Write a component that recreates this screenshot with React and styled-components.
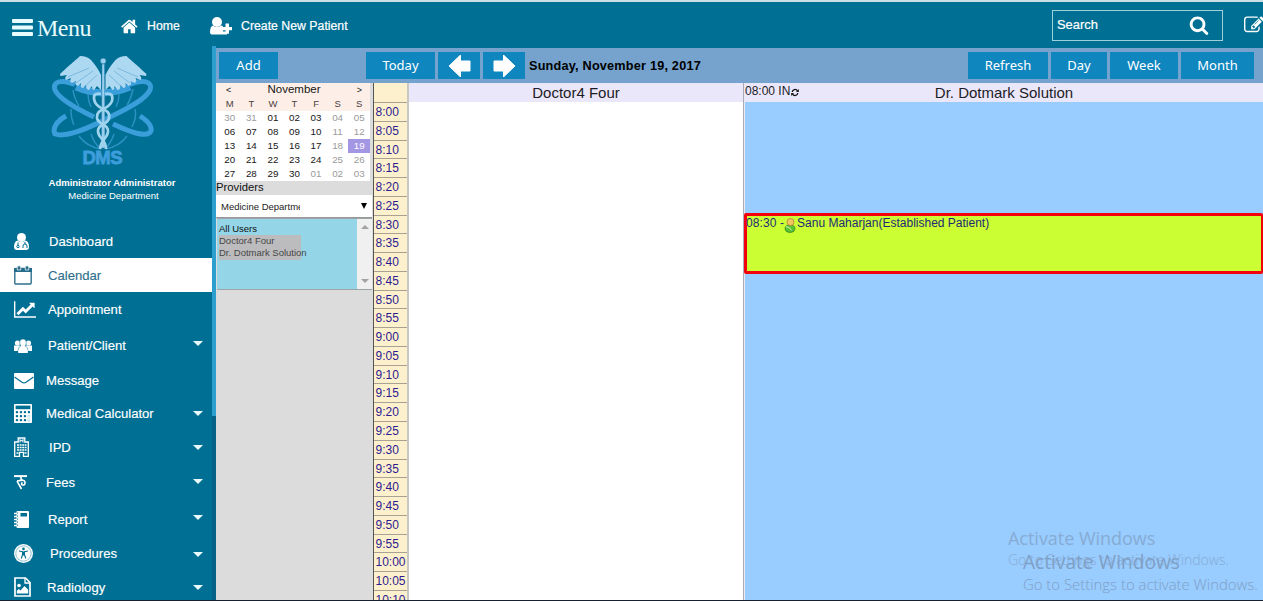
import React from "react";
import styled, { createGlobalStyle } from "styled-components";

const Global = createGlobalStyle`
  * { box-sizing: border-box; }
  body { margin: 0; overflow: hidden; font-family: "Liberation Sans", Arial, sans-serif; }
  svg { display: block; flex: none; }
`;

const Page = styled.div`
  width: 1263px; height: 601px; display: flex; flex-direction: column;
  background: #006f94; border-top: 2px solid #c9dfe4; border-bottom: 1px solid #16202e;
  overflow: hidden; color: #fff;
`;
const Header = styled.header`
  height: 46px; flex: none; display: flex; align-items: center; padding-left: 12px;
`;
const MenuTitle = styled.div`
  display: flex; align-items: center; gap: 4px; width: 109px; padding-top: 5px;
  font: 24px/28px "Liberation Serif", "Times New Roman", serif; letter-spacing: -0.5px; color: #e8fbff;
`;
const HeaderLink = styled.div`
  display: flex; align-items: center; gap: ${p => p.$gap}px; width: ${p => p.$w}px; padding-top: 2px;
  font-size: 12.3px; line-height: 16px; white-space: nowrap; -webkit-text-stroke: 0.2px #fff;
`;
const SearchBox = styled.div`
  margin-left: auto; width: 171px; height: 31px; border: 1px solid #9fd0dc; display: flex; align-items: center;
  justify-content: space-between; padding: 0 13px 1px 4px; font-size: 12.9px; -webkit-text-stroke: 0.2px #fff;
`;
const HeaderEdit = styled.div` margin-left: 21px; width: 19px; height: 21px; overflow: hidden; `;

const Body = styled.div` flex: 1; min-height: 0; display: flex; `;
const Sidebar = styled.aside` width: 212px; flex: none; overflow: hidden; display: flex; flex-direction: column; `;
const Scroll = styled.div` width: 4px; flex: none; margin-top: -2px; background: #056388; `;
const Thumb = styled.div` height: 370px; background: #2d9fce; `;
const Profile = styled.div`
  height: 176px; flex: none; padding: 6px 0 0 48px; display: flex; flex-direction: column;
  font-size: 9.4px; line-height: 13px; white-space: nowrap;
  svg { margin: 0 0 9px 3px; }
`;
const ProfileLine = styled.div`
  width: 128px; text-align: center; font-size: 9.5px;
  font-weight: ${p => (p.$strong ? 700 : 400)};
  padding-left: ${p => (p.$strong ? 0 : 3)}px;
`;
const Item = styled.div`
  height: ${p => p.$h}px; flex: none; display: flex; align-items: center; padding: 0 9px 0 14px;
  background: ${p => (p.$active ? "#fff" : "transparent")}; color: ${p => (p.$active ? "#30708e" : "#fff")};
  font-size: 13.1px; white-space: nowrap;
`;
const IconSlot = styled.span` width: ${p => p.$w}px; flex: none; `;
const ItemLabel = styled.span` flex: 1; -webkit-text-stroke: 0.15px currentColor; `;
const Caret = styled.i`
  border: 5px solid transparent; border-top-color: #e9fbff; border-bottom: 0; margin-top: ${p => p.$up || 0}px;
`;

const Main = styled.main` flex: 1; min-width: 0; display: flex; flex-direction: column; color: #000; `;
const Toolbar = styled.div`
  height: 35px; flex: none; background: #75a3cd; display: flex; align-items: center; padding: 0 9px 0 3px;
`;
const Button = styled.div`
  width: ${p => p.$w}px; height: 27px; margin-left: ${p => p.$ml || 0}px; flex: none; background: #1086bf; color: #fff;
  display: flex; align-items: center; justify-content: center; padding-bottom: 2px;
  font: 13px/20px "Noto Sans", sans-serif;
  svg { margin-top: 2px; }
`;
const DateTitle = styled.div` flex: 1; padding-left: 4px; font-weight: 700; font-size: 12.7px; letter-spacing: 0.2px; white-space: nowrap; `;
const Content = styled.div` flex: 1; min-height: 0; display: flex; overflow: hidden; `;

const Side = styled.div` width: 158px; flex: none; background: #dcdcdc; border-right: 1px solid #555; `;
const MonthCard = styled.div`
  width: 154px; height: 98px; background: linear-gradient(#fdefe8 28px, #fff 28px); padding: 0 0 0 3px; color: #161616;
`;
const MonthHead = styled.div`
  height: 14px; display: flex; align-items: center; justify-content: space-between; padding: 0 8px 0 7px; font-size: 9px;
`;
const MonthName = styled.span` font-size: 11.5px; line-height: 13px; padding-bottom: 2px; `;
const Days = styled.div` display: grid; grid-template-columns: repeat(7, 21.57px); grid-auto-rows: 14px; `;
const Day = styled.div`
  font-size: 9.8px; line-height: 14px; text-align: center;
  color: ${p => (p.$on ? "#fff" : p.$dim ? "#9a9a9a" : "#161616")};
  background: ${p => (p.$on ? "#a396e2" : "transparent")};
`;
const Weekday = styled(Day)` font-size: 9.5px; color: #4b4040; `;
const Providers = styled.div` height: 14px; font-size: 11.3px; line-height: 13px; color: #111; `;
const Select = styled.div`
  height: 23px; margin-right: 1px; background: #fff; display: flex; align-items: center; justify-content: space-between;
  padding: 0 5px 0 5px; font-size: 9.5px; border-bottom: 1px solid #999; color: #222;
`;
const SelectText = styled.span` width: 79px; overflow: hidden; white-space: nowrap; `;
const Arrow = styled.i`
  border: ${p => p.$s}px solid transparent; height: 0;
  ${p => p.$up ? "border-top: 0; border-bottom-color" : "border-bottom: 0; border-top-color"}: ${p => p.$c};
  ${p => p.$tall ? "border-top-width: 6px;" : ""}
`;
const List = styled.div` height: 72px; margin: 0 1px 0 1px; display: flex; background: #94d5e7; border: solid #9ca4a6; border-width: 1px 0; `;
const Users = styled.div` flex: 1; padding: 4px 0 0 2px; font-size: 9.5px; line-height: 12.2px; white-space: nowrap; color: #111; `;
const Picked = styled.div` width: 82px; background: #bcbcbe; color: #464646; `;
const ListScroll = styled.div`
  width: 15px; background: #f0f0f0; display: flex; flex-direction: column; align-items: center; justify-content: space-between; padding: 6px 0;
`;

const Times = styled.div` width: 35px; flex: none; background: #fdf0cd; border-right: 2px solid #c9c7c2; overflow: hidden; `;
const TimeHead = styled.div` height: 20px; border-bottom: 1px solid #a9a294; `;
const Time = styled.div`
  height: 18.77px; border-bottom: 1px solid #a9a294; padding-left: 1.500px;
  font-size: 12px; line-height: 18px; color: #2d1b92;
`;
const Column = styled.section`
  flex: ${p => (p.$w ? `0 0 ${p.$w}px` : 1)}; min-width: 0; background: ${p => p.$bg};
  display: flex; flex-direction: column; position: relative;
`;
const Divider = styled.div` width: 2px; flex: none; background: #e9e9f3; border-left: 1px solid #a7abb5; `;
const ColumnHead = styled.div`
  height: 19px; flex: none; background: #ebe7fb; display: grid; grid-template-columns: 1fr auto 1fr;
  font-size: 15px; line-height: 19px; color: #1c1c25; white-space: nowrap;
`;
const Status = styled.div` display: flex; font-size: 12px; line-height: 16px; svg { margin: 5px 0 0 1px; } `;
const Event = styled.div`
  margin: 111px 0 0 -1px; height: 61px; border: 3px solid #f4000c; border-right-width: 2px; border-radius: 2px; background: #ccff33;
  display: flex; font-size: 12px; line-height: 15px; color: #222a75; white-space: nowrap;
  svg { margin: 2px 1px 0 0; }
`;
const EventTime = styled.span` letter-spacing: 0.1px; margin-left: -1px; `;
const Watermark = styled.div`
  position: absolute; left: ${p => p.$x}px; top: ${p => p.$y}px; color: ${p => p.$c};
  font: 300 ${p => p.$s}px/20px "Open Sans", "Noto Sans", sans-serif; white-space: nowrap;
`;
const WatermarkTitle = styled.div` font-size: 1.283em; line-height: 24px; font-weight: 400; `;

const Fa = ({ d, w, h, box = "0 0 1792 1792" }) => (
  <svg width={w} height={h} viewBox={box} fill="currentColor" preserveAspectRatio="none"><path d={d} /></svg>
);
const homeD = "M1408 992v480q0 26-19 45t-45 19h-384v-384h-256v384h-384q-26 0-45-19t-19-45v-480q0-1 .5-3t.5-3l575-474 575 474q1 2 1 6zm223-69l-62 74q-8 9-21 11h-3q-13 0-21-7l-692-577-692 577q-12 8-24 7-13-2-21-11l-62-74q-8-10-7-23.5t11-21.5l719-599q32-26 76-26t76 26l244 204v-195q0-14 9-23t23-9h192q14 0 23 9t9 23v408l219 182q10 8 11 21.5t-7 23.5z";
const searchD = "M1216 832q0-185-131.5-316.5t-316.5-131.5-316.5 131.5-131.5 316.5 131.5 316.5 316.5 131.5 316.5-131.5 131.5-316.5zm512 832q0 52-38 90t-90 38q-54 0-90-38l-343-342q-179 124-399 124-143 0-273.5-55.5t-225-150-150-225-55.5-273.5 55.5-273.5 150-225 225-150 273.5-55.5 273.5 55.5 225 150 150 225 55.5 273.5q0 220-124 399l343 343q37 37 37 90z";
const editD = "M888 1184l116-116-152-152-116 116v56h96v96h56zm440-720q-16-16-33 1l-350 350q-17 17-1 33t33-1l350-350q17-17 1-33zm80 594v190q0 119-84.5 203.5t-203.5 84.5h-832q-119 0-203.5-84.5t-84.5-203.5v-832q0-119 84.5-203.5t203.5-84.5h832q63 0 117 25 15 7 18 23 3 17-9 29l-49 49q-14 14-32 8-23-6-45-6h-832q-66 0-113 47t-47 113v832q0 66 47 113t113 47h832q66 0 113-47t47-113v-126q0-13 9-22l64-64q15-15 35-7t20 29zm-96-738l288 288-672 672h-288v-288zm444 132l-92 92-288-288 92-92q28-28 68-28t68 28l152 152q28 28 28 68t-28 68z";
const chartD = "M2048 1536v128h-2048v-1536h128v1408h1920zm-128-1248v435q0 21-19.5 29.5t-35.5-7.5l-121-121-633 633q-10 10-23 10t-23-10l-233-233-416 416-192-192 585-585q10-10 23-10t23 10l233 233 464-464-121-121q-16-16-7.5-35.5t29.5-19.5h435q14 0 23 9t9 23z";

const BG = "#006f94";
const Bars = () => <svg width="21" height="17" fill="#e8fbff"><rect width="21" height="4" rx="1" /><rect y="6.500" width="21" height="4" rx="1" /><rect y="13" width="21" height="4" rx="1" /></svg>;
const UserPlus = () => (
  <svg width="22" height="18" fill="#fff">
    <circle cx="7" cy="5" r="5" />
    <path d="M3 8.500q4 3 8 0 1.500 0 2 1v5h4v3H2q-2 0-2-2 0-6 3-7z" />
    <path d="M15.500 6.500h3.500v3.500h3v3.200h-3v3.500h-3.500v-3.500h-3V10h3z" />
  </svg>
);
const Doctor = () => (
  <svg width="15" height="17">
    <circle cx="7.500" cy="4.500" r="4.500" fill="#fff" />
    <path d="M3.500 7.500q4 3 8 0 3.500 1 3.500 6.500 0 3-3 3H3q-3 0-3-3 0-5.500 3.500-6.500z" fill="#fff" />
    <g fill="none" stroke={BG} strokeWidth="1"><path d="M4 9.500v3M9 15v-2q0-2 2-2t2 2v2M11 9V11" /><circle cx="4" cy="13.500" r="1.200" /></g>
  </svg>
);
const Cal = () => (
  <svg width="18" height="20" fill="none" stroke="#30708e">
    <rect x=".8" y="3.500" width="16.400" height="15.500" rx="1" strokeWidth="1.400" />
    <path d="M0 3h18v4H0z" fill="#256c8c" stroke="none" />
    <path d="M3.300 1.500q1.700-1.500 3.400 0V5H3.300zM11.300 1.500q1.700-1.500 3.400 0V5h-3.400z" fill="#256c8c" stroke="#fff" strokeWidth=".7" />
  </svg>
);
const Group = () => (
  <svg width="18" height="14" fill="#fff">
    <circle cx="3.500" cy="4" r="2.600" /><circle cx="14.500" cy="4" r="2.600" />
    <path d="M0 6.500h18V12H0z" />
    <path d="M9 0q3.500 0 3.300 3.500-.1 2-1.300 3.500 3 .8 3 4.500V14H4v-2.500Q4 7.800 7 7 5.800 5.500 5.700 3.500 5.500 0 9 0z" stroke={BG} strokeWidth=".5" />
    <path d="M4.500 11h9v3h-9z" />
  </svg>
);
const Mail = () => (
  <svg width="20" height="16"><rect width="20" height="16" rx="1" fill="#fff" /><path d="M.5 4l7.500 5.300q2 1.300 4 0L19.500 4" fill="none" stroke={BG} strokeWidth="1.200" /></svg>
);
const Calc = () => (
  <svg width="18" height="19" fill={BG}>
    <rect width="18" height="19" rx="1" fill="#fff" /><rect x="1.600" y="1.600" width="14.800" height="3.600" />
    {[7, 11, 15].map(y => [1.8, 5.8, 9.8, 13.8].map(x => <rect key={x + "-" + y} x={x} y={y} width="2.300" height="2.300" rx=".8" />))}
    <rect x="13.800" y="11" width="2.300" height="6" rx=".8" fill="#d8f0f5" />
  </svg>
);
const Hospital = () => (
  <svg width="15" height="20" fill="none" stroke="#fff" strokeWidth="1.300">
    <path d="M.7 19.300V5h3.500V1h6.600v4h3.500v14.300H9.500v-4h-4v4z" />
    <path d="M6 2v3.500M9 2v3.500M6 3.700h3" strokeWidth="1" />
    <path d="M3 8h9.500M3 10.500h9.500M3 13h9.500" strokeDasharray="2 .6" strokeWidth="1.500" /><path d="M2.500 16h2M10.500 16h2" />
  </svg>
);
const Rupee = () => (
  <svg width="13" height="15" fill="none" stroke="#fff" strokeWidth="1.600">
    <path d="M0 1.100h13" strokeWidth="2" /><path d="M6.500 1.500Q8.500 5.200 5 5.800H3M5 5.800q5-1.800 6 1.200Q11.300 10.500 8.500 10q-2-1 0-2.500M3 6.200l4.500 7.800" />
  </svg>
);
const Book = () => (
  <svg width="15" height="17"><rect x="2.500" width="12.500" height="17" rx="1" fill="#fff" /><rect x="6.500" y="2" width="6.500" height="3.500" fill={BG} />
    <path d="M0 2.500h5M0 5.500h5M0 8.500h5M0 11.500h5M0 14.500h5" stroke="#fff" strokeWidth="1.300" /><path d="M3.600 1.500v15" stroke={BG} strokeWidth=".9" strokeDasharray="1.200 1.800" /></svg>
);
const Access = () => (
  <svg width="19" height="19"><circle cx="9.500" cy="9.500" r="9.500" fill="#fff" /><circle cx="9.500" cy="9.500" r="7.700" fill="none" stroke="#5da6ba" strokeWidth=".7" />
    <circle cx="9.500" cy="4.900" r="1.300" fill={BG} /><path d="M5 7l3.500.8v3l-1.300 3.700M14 7l-3.500.8v3l1.300 3.700M9.500 7.500v4" stroke={BG} strokeWidth="1.100" fill="none" /></svg>
);
const Photo = () => (
  <svg width="17" height="20"><path d="M1 1h10.500L16 5.500V19H1z" fill="none" stroke="#fff" strokeWidth="1.700" /><path d="M11 1v5h5" fill="none" stroke="#fff" strokeWidth="1.300" />
    <circle cx="5" cy="8.500" r="1.800" fill="#fff" /><path d="M2.800 16.500v-2.800l2-1.600 1.700 1.400 4-4.500 3.700 3.800v3.700z" fill="#fff" /></svg>
);

const wing = "M101 75 Q98 68 91 60 Q87 56 80 56 C76 60 74 61 60 74 L60.500 76 L67 75 Q64 78 66 80 L71 78 Q69 82 72 83 L76 81 Q74 85 78 86 L81 83 Q80 88 83 88 L86 85 Q86 90 89 90 L92 86 Q92 90 94 90 L97 86 L101 90 Z";
const Logo = () => (
  <svg width="104" height="113" viewBox="51 54 104 113">
    <g fill="none" stroke="#2b91c2" strokeWidth="1.500">
      <path d="M73 90Q74 98 79 106M88 94Q88 101 91 107M133 89Q131 99 127 105M119 94Q119 101 116 107M71 109Q71 119 74 125M135 109Q137 117 132 127M79 136Q87 147 101 149M91 134Q94 143 100 148M127 136Q119 147 105 149M114 134Q111 143 106 148" />
    </g>
    <g fill="none" stroke="#3a9edb" strokeWidth="5">
      <path d="M75 84.500C62 79 52 81 55 90C59 99 75 108 94 117M113 124C132 133 148 138 151 131C152 126 148 121 140 116" />
      <path d="M129 84.500C143 79 153 81 150 90C146 99 129 108 110 117C87 129 66 138 55 134C52 128 57 121 66 116" />
      <path d="M76 87Q88 92 102 93Q118 92 130 87" strokeWidth="7" />
    </g>
    <path d={wing} fill="#add8f2" /><path d={wing} fill="#add8f2" transform="translate(206.500 0) scale(-1 1)" />
    <g stroke="#5ba5cb" strokeWidth=".6" fill="none"><path d="M68 77L89 68M76 83L93 71M84 87L97 75M138 77L117 68M130 83L114 71M122 87L109 75" /></g>
    <path d="M102 64L101.500 148h3.500L104.500 64z" fill="#9bcfee" stroke="#2d83b3" strokeWidth=".5" /><circle cx="103.200" cy="61" r="2.800" fill="#9bcfee" stroke="#2d83b3" strokeWidth=".5" />
    <g fill="none" stroke="#9fd4ef" strokeWidth="2.700">
      <path d="M101 94Q92 92 94.500 101C98 111 111 108 109 118C108 125 97 124 98 132C99 139 106 139 106 149" />
      <path d="M105 94Q114 92 112 101C108 111 96 108 97 118C98 125 109 124 108 132C107 139 101 139 100 149" />
    </g>
    <text x="102.500" y="163.500" textAnchor="middle" fontFamily="Liberation Sans" fontWeight="700" fontSize="18.500" textLength="40" fill="#3d9edb" stroke="#3d9edb" strokeWidth=".8">DMS</text>
  </svg>
);
const BigArrow = ({ flip }) => (
  <svg width="23" height="22" viewBox="0 0 23 22"><path d="M1 11L12.500 0V6H22v10h-9.500v6z" fill="#fff" stroke="#fff" strokeLinejoin="round" transform={flip ? "translate(23 0) scale(-1 1)" : undefined} /></svg>
);
const Refresh = () => (
  <svg width="8" height="9" viewBox="0 0 8 9" fill="none" stroke="#111" strokeWidth="1.300"><path d="M1.200 4A2.900 2.900 0 0 1 6.500 2.800M6.800 5A2.900 2.900 0 0 1 1.500 6.200" /><path d="M7.800 1v3H5zM.2 8V5H3z" fill="#111" stroke="none" /></svg>
);
const Person = () => (
  <svg width="12" height="15" viewBox="0 0 12 15"><path d="M6 6.500Q11 7 11 11q-.5 3.500-5 3.500T1 11q0-4 5-4.500z" fill="#58c433" stroke="#2f7a1c" strokeWidth=".7" /><circle cx="6.500" cy="4" r="3.500" fill="#f0c860" stroke="#c07a3c" strokeWidth=".8" /><path d="M2 8.500q3 .5 5.500 3.500" stroke="#d4f7b8" fill="none" /></svg>
);

const items = [
  ["Dashboard", 34, 35, <Doctor />],
  ["Calendar", 34, 34, <Cal />],
  ["Appointment", 34, 34, <Fa d={chartD} w={22} h={19} box="0 0 2048 1792" />],
  ["Patient/Client", 39, 34, <Group />, -4],
  ["Message", 31, 32, <Mail />],
  ["Medical Calculator", 34, 32, <Calc />, 1],
  ["IPD", 34, 35, <Hospital />, 1],
  ["Fees", 37, 32, <Rupee />, -3],
  ["Report", 36, 34, <Book />, -4],
  ["Procedures", 33, 36, <Access />, 1],
  ["Radiology", 34, 33, <Photo />, 1],
];
const dates = "30 31 01 02 03 04 05 06 07 08 09 10 11 12 13 14 15 16 17 18 19 20 21 22 23 24 25 26 27 28 29 30 01 02 03".split(" ");
const times = Array.from({ length: 27 }, (_, i) => `${8 + Math.floor(i / 12)}:${String((i % 12) * 5).padStart(2, "0")}`);

export default function App() {
  return (
    <Page>
      <Global />
      <Header>
        <MenuTitle><Bars />Menu</MenuTitle>
        <HeaderLink $gap={8} $w={89}><Fa d={homeD} w={18} h={19} />Home</HeaderLink>
        <HeaderLink $gap={9} $w={200}><UserPlus />Create New Patient</HeaderLink>
        <SearchBox>Search<Fa d={searchD} w={20} h={20} /></SearchBox>
        <HeaderEdit><Fa d={editD} w={20} h={20} /></HeaderEdit>
      </Header>
      <Body>
        <Sidebar>
          <Profile>
            <Logo />
            <ProfileLine $strong>Administrator Administrator</ProfileLine>
            <ProfileLine>Medicine Department</ProfileLine>
          </Profile>
          {items.map(([name, h, w, icon, up]) => (
            <Item key={name} $h={h} $active={name === "Calendar"}>
              <IconSlot $w={w}>{icon}</IconSlot>
              <ItemLabel>{name}</ItemLabel>
              {up !== undefined && <Caret $up={up} />}
            </Item>
          ))}
        </Sidebar>
        <Scroll><Thumb /></Scroll>
        <Main>
          <Toolbar>
            <Button $w={59}>Add</Button>
            <Button $w={69} $ml={88}>Today</Button>
            <Button $w={42} $ml={3}><BigArrow /></Button>
            <Button $w={42} $ml={3}><BigArrow flip /></Button>
            <DateTitle>Sunday, November 19, 2017</DateTitle>
            <Button $w={80}>Refresh</Button>
            <Button $w={56} $ml={3}>Day</Button>
            <Button $w={68} $ml={3}>Week</Button>
            <Button $w={73} $ml={3}>Month</Button>
          </Toolbar>
          <Content>
            <Side>
              <MonthCard>
                <MonthHead><span>&lt;</span><MonthName>November</MonthName><span>&gt;</span></MonthHead>
                <Days>
                  {[..."MTWTFSS"].map((d, i) => <Weekday key={i}>{d}</Weekday>)}
                  {dates.map((d, i) => <Day key={i} $on={i === 20} $dim={i < 2 || i > 31 || i % 7 > 4}>{d}</Day>)}
                </Days>
              </MonthCard>
              <Providers>Providers</Providers>
              <Select><SelectText>Medicine Department</SelectText><Arrow $s={3.5} $c="#000" $tall /></Select>
              <List>
                <Users>All Users<Picked>Doctor4 Four</Picked><Picked>Dr. Dotmark Solution</Picked></Users>
                <ListScroll><Arrow $up $s={4} $c="#a2a2a2" /><Arrow $s={4} $c="#a2a2a2" /></ListScroll>
              </List>
            </Side>
            <Times>
              <TimeHead />
              {times.map(t => <Time key={t}>{t}</Time>)}
            </Times>
            <Column $w={334} $bg="#fff">
              <ColumnHead><span /><span>Doctor4 Four</span><span /></ColumnHead>
            </Column>
            <Divider />
            <Column $bg="#99ccff">
              <ColumnHead><Status>08:00 IN<Refresh /></Status><span>Dr. Dotmark Solution</span><span /></ColumnHead>
              <Event><EventTime>08:30 -</EventTime><Person />Sanu Maharjan(Established Patient)</Event>
              <Watermark $x={263} $y={443} $s={14} $c="#86abd4"><WatermarkTitle>Activate Windows</WatermarkTitle>Go to Settings to activate Windows.</Watermark>
              <Watermark $x={278} $y={467} $s={14.9} $c="#7f9fc5"><WatermarkTitle>Activate Windows</WatermarkTitle>Go to Settings to activate Windows.</Watermark>
            </Column>
          </Content>
        </Main>
      </Body>
    </Page>
  );
}
